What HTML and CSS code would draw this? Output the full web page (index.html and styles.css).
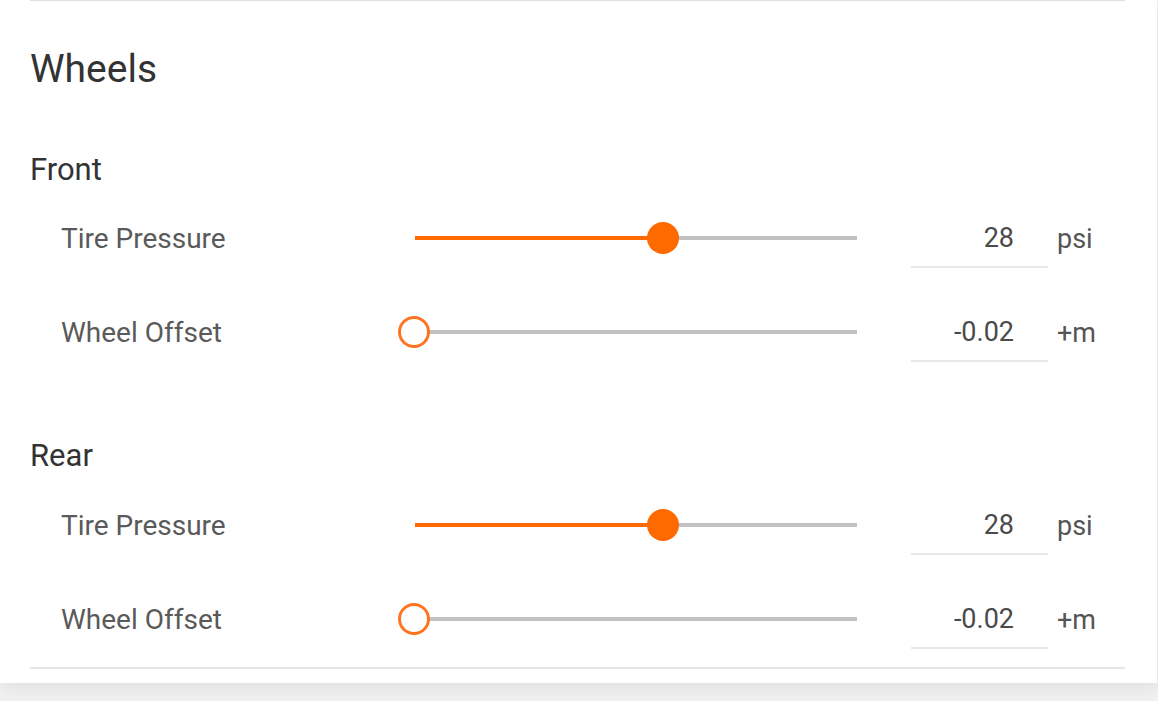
FILE: index.html
```html
<!DOCTYPE html>
<html lang="en">
<head>
<meta charset="utf-8">
<title>Wheels</title>
<link rel="stylesheet" href="styles.css">
</head>
<body>
<div class="card">
  <div class="divider"></div>
  <h2 class="title">Wheels</h2>

  <h3 class="group">Front</h3>
  <div class="row">
    <div class="label">Tire Pressure</div>
    <div class="slider">
      <div class="track"></div>
      <div class="fill" style="width:56%"></div>
      <div class="thumb" style="left:56%"></div>
    </div>
    <div class="value">28</div>
    <div class="unit">psi</div>
  </div>
  <div class="row">
    <div class="label">Wheel Offset</div>
    <div class="slider">
      <div class="track"></div>
      <div class="thumb thumb-empty" style="left:0%"></div>
    </div>
    <div class="value">-0.02</div>
    <div class="unit">+m</div>
  </div>

  <h3 class="group group-rear">Rear</h3>
  <div class="row">
    <div class="label">Tire Pressure</div>
    <div class="slider">
      <div class="track"></div>
      <div class="fill" style="width:56%"></div>
      <div class="thumb" style="left:56%"></div>
    </div>
    <div class="value">28</div>
    <div class="unit">psi</div>
  </div>
  <div class="row">
    <div class="label">Wheel Offset</div>
    <div class="slider">
      <div class="track"></div>
      <div class="thumb thumb-empty" style="left:0%"></div>
    </div>
    <div class="value">-0.02</div>
    <div class="unit">+m</div>
  </div>

  <div class="divider divider-bottom"></div>
</div>
</body>
</html>
```

FILE: styles.css
```css
html, body {
  margin: 0;
  padding: 0;
}

body {
  background: #f1f1f1;
  font-family: Roboto, "Liberation Sans", Arial, sans-serif;
  width: 1158px;
  height: 701px;
  overflow: hidden;
}

.card {
  width: 1095px;
  background: #ffffff;
  padding: 0 32px 14px 30px;
  box-shadow: 1px 6px 18px rgba(0, 0, 0, 0.07);
}

.divider {
  height: 1px;
  background: #e0e0e0;
}

.divider-bottom {
  margin-top: 1px;
  height: 2px;
  background: #e6e6e6;
}

.title {
  margin: 45px 0 0;
  font-size: 39px;
  line-height: 46px;
  font-weight: 400;
  color: #333333;
}

.group {
  margin: 60px 0 3px;
  font-size: 31px;
  line-height: 36px;
  font-weight: 400;
  color: #333333;
}

.group-rear {
  margin-top: 59px;
  margin-bottom: 4px;
}

.row {
  display: flex;
  align-items: center;
  height: 94px;
  padding-left: 31px;
}

.label {
  flex: 0 0 354px;
  font-size: 28px;
  color: #5a5a5a;
}

.slider {
  position: relative;
  flex: 0 0 442px;
  height: 32px;
}

.track {
  position: absolute;
  left: 0;
  right: 0;
  top: 14px;
  height: 4px;
  background: #c2c2c2;
}

.fill {
  position: absolute;
  left: 0;
  top: 14px;
  height: 4px;
  background: #ff6a00;
}

.thumb {
  position: absolute;
  top: 0;
  width: 32px;
  height: 32px;
  margin-left: -16px;
  border-radius: 50%;
  background: #ff6a00;
  box-sizing: border-box;
}

.thumb-empty {
  margin-left: -17px;
  background: #ffffff;
  border: 3px solid #ff7420;
}

.value {
  flex: 0 0 137px;
  box-sizing: border-box;
  height: 60px;
  margin-left: 54px;
  padding-top: 2px;
  padding-right: 34px;
  border-bottom: 2px solid #e8e8e8;
  display: flex;
  align-items: center;
  justify-content: flex-end;
  font-size: 27px;
  color: #4a4a4a;
}

.unit {
  margin-left: 9px;
  padding-top: 2px;
  font-size: 27px;
  color: #555555;
}
```
